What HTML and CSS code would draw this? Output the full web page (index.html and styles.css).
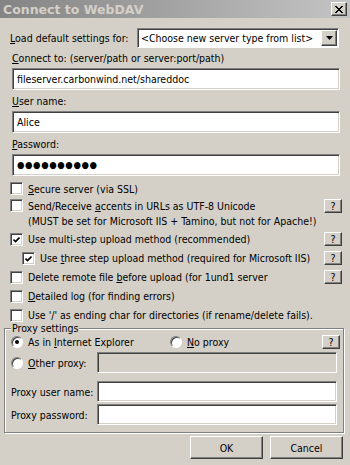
FILE: index.html
```html
<!DOCTYPE html>
<html lang="en">
<head>
    <meta charset="UTF-8">
    <meta name="viewport" content="width=device-width, initial-scale=1.0">
    <title>Connect to WebDAV</title>
    <link rel="stylesheet" href="styles.css">
</head>
<body>
    <div class="window">
        <div class="titlebar">
            <span class="title">Connect to WebDAV</span>
            <span class="close">
                <svg width="8" height="7" viewBox="0 0 8 7"><path d="M0 0L7 7M1 0L8 7M7 0L0 7M8 0L1 7" stroke="#000" stroke-width="1"/></svg>
            </span>
        </div>

        <div class="content">
            <div class="load-row">
                <span class="load-label"><u>L</u>oad default settings for:</span>
                <div class="combo">
                    <span class="combo-text">&lt;Choose new server type from list&gt;</span>
                    <span class="combo-btn">
                        <svg width="7" height="4" viewBox="0 0 7 4"><path d="M0 0H7L3.5 4Z" fill="#000"/></svg>
                    </span>
                </div>
            </div>

            <div class="field-label label-connect"><u>C</u>onnect to: (server/path or server:port/path)</div>
            <div class="textbox">fileserver.carbonwind.net/shareddoc</div>

            <div class="field-label"><u>U</u>ser name:</div>
            <div class="textbox">Alice</div>

            <div class="field-label"><u>P</u>assword:</div>
            <div class="textbox dots">&#9679;&#9679;&#9679;&#9679;&#9679;&#9679;&#9679;&#9679;&#9679;&#9679;</div>

            <div class="check-row first">
                <span class="check"></span>
                <span><u>S</u>ecure server (via SSL)</span>
            </div>
            <div class="check-row accents">
                <span class="check"></span>
                <span class="grow">Send/Receive <u>a</u>ccents in URLs as UTF-8 Unicode</span>
                <span class="help">?</span>
            </div>
            <div class="sub-line">(MUST be set for Microsoft IIS + Tamino, but not for Apache!)</div>
            <div class="check-row multi">
                <span class="check"><svg width="7" height="7" viewBox="0 0 7 7"><path d="M0.5 3.5L2.5 5.5L6.5 1.5" fill="none" stroke="#000" stroke-width="1.6"/></svg></span>
                <span class="grow">Use multi-step upload method (recommended)</span>
                <span class="help">?</span>
            </div>
            <div class="check-row indent">
                <span class="check"><svg width="7" height="7" viewBox="0 0 7 7"><path d="M0.5 3.5L2.5 5.5L6.5 1.5" fill="none" stroke="#000" stroke-width="1.6"/></svg></span>
                <span class="grow">Use <u>t</u>hree step upload method (required for Microsoft IIS)</span>
                <span class="help">?</span>
            </div>
            <div class="check-row">
                <span class="check"></span>
                <span class="grow">Delete remote file <u>b</u>efore upload (for 1und1 server</span>
                <span class="help">?</span>
            </div>
            <div class="check-row">
                <span class="check"></span>
                <span><u>D</u>etailed log (for finding errors)</span>
            </div>
            <div class="check-row">
                <span class="check"></span>
                <span>Use '/' as ending char for directories (if rename/delete fails).</span>
            </div>
        </div>

        <fieldset class="group">
            <legend>Proxy settings</legend>
            <div class="radio-row">
                <span class="radio on"></span>
                <span class="radio-text">As in <u>I</u>nternet Explorer</span>
                <span class="radio"></span>
                <span class="grow"><u>N</u>o proxy</span>
                <span class="help">?</span>
            </div>
            <div class="proxy-row">
                <span class="proxy-label"><span class="radio"></span><span><u>O</u>ther proxy:</span></span>
                <div class="textbox small disabled"></div>
            </div>
            <div class="proxy-row user">
                <span class="proxy-label">Proxy user name:</span>
                <div class="textbox small"></div>
            </div>
            <div class="proxy-row">
                <span class="proxy-label">Proxy password:</span>
                <div class="textbox small"></div>
            </div>
        </fieldset>

        <div class="buttons">
            <button class="btn">OK</button>
            <button class="btn">Cancel</button>
        </div>
    </div>
</body>
</html>
```

FILE: styles.css
```css
body {
margin: 0;
background-color: #d4d0c8;
font-family: "DejaVu Sans Condensed", "DejaVu Sans", sans-serif;
font-stretch: condensed;
font-size: 10.5px;
color: #000;
}

.window {
width: 350px;
height: 465px;
background-color: #d4d0c8;
overflow: hidden;
}

/* Title bar (inactive caption) */
.titlebar {
height: 18px;
display: flex;
align-items: center;
justify-content: space-between;
padding: 0 3px 0 3px;
background: linear-gradient(to right, #848484, #c4c4c4);
}

.title {
font-family: "DejaVu Sans", sans-serif;
font-stretch: normal;
font-weight: bold;
font-size: 12.5px;
color: #d4d0c8;
}

.close {
width: 14px;
height: 12px;
display: flex;
align-items: center;
justify-content: center;
background-color: #d4d0c8;
border: 1px solid;
border-color: #fff #404040 #404040 #fff;
box-shadow: inset -1px -1px #808080;
}

.content {
padding: 0 8px 0 10px;
}

/* Top combo box */
.load-row {
display: flex;
align-items: center;
margin-top: 10px;
height: 20px;
}

.load-label {
width: 127px;
white-space: nowrap;
}

.combo {
display: flex;
align-items: center;
width: 202px;
height: 20px;
box-sizing: border-box;
background: #fff;
border: 1px solid;
border-color: #808080 #fff #fff #808080;
box-shadow: inset 1px 1px #404040;
padding: 1px 1px 1px 3px;
}

.combo-text {
flex: 1;
line-height: 15px;
white-space: nowrap;
overflow: hidden;
}

.combo-btn {
width: 16px;
height: 16px;
box-sizing: border-box;
display: flex;
align-items: center;
justify-content: center;
background: #d4d0c8;
border: 1px solid;
border-color: #fff #404040 #404040 #fff;
box-shadow: inset -1px -1px #808080;
}

/* Labels and text boxes */
.field-label {
height: 14px;
line-height: 14px;
margin: 4px 0 3px 2px;
}

.label-connect {
margin-top: 3px;
}

.textbox {
height: 22px;
box-sizing: border-box;
margin-left: 2px;
width: 328px;
background: #fff;
border: 1px solid;
border-color: #808080 #fff #fff #808080;
box-shadow: inset 1px 1px #404040, inset -1px -1px #d4d0c8;
padding: 0 4px;
line-height: 20px;
white-space: nowrap;
}

.dots {
font-size: 9.5px;
letter-spacing: 0.6px;
}

/* Check boxes */
.check-row {
display: flex;
align-items: center;
height: 18px;
margin-top: 1px;
white-space: nowrap;
}

.check-row.first {
margin-top: 4px;
height: 17px;
}

.check-row.accents {
margin-top: 0;
height: 17px;
}

.check-row.multi {
margin-top: 2px;
}

.check-row.indent {
padding-left: 12px;
}

.sub-line {
height: 14px;
line-height: 14px;
padding-left: 18px;
white-space: nowrap;
}

.check {
width: 13px;
height: 13px;
box-sizing: border-box;
flex-shrink: 0;
margin: 0 5px 0 0;
background: #fff;
border: 1px solid;
border-color: #808080 #fff #fff #808080;
box-shadow: inset 1px 1px #404040, inset -1px -1px #d4d0c8;
display: flex;
align-items: center;
justify-content: center;
}

.grow {flex: 1;}

.help {
width: 18px;
height: 14px;
box-sizing: border-box;
text-align: center;
line-height: 12px;
flex-shrink: 0;
border: 1px solid;
border-color: #fff #404040 #404040 #fff;
box-shadow: inset -1px -1px #808080;
}

/* Proxy group */
.group {
margin: -2px 6px 0 4px;
padding: 0 3px 7px 6px;
min-width: 0;
border: 1px solid #808080;
box-shadow: inset 1px 1px #fff, 1px 1px #fff;
}

.group legend {
padding: 0 1px;
margin-left: 0;
line-height: 12px;
background: #d4d0c8;
}

.radio-row {
display: flex;
align-items: center;
height: 16px;
white-space: nowrap;
}

.radio {
width: 12px;
height: 12px;
box-sizing: border-box;
flex-shrink: 0;
border-radius: 50%;
background: #fff;
border: 1px solid;
border-color: #808080 #fff #fff #808080;
box-shadow: inset 1px 1px #404040;
margin-right: 5px;
display: flex;
align-items: center;
justify-content: center;
}

.radio.on::after {
content: "";
width: 4px;
height: 4px;
border-radius: 50%;
background: #000;
}

.radio-text {
width: 142px;
}

.proxy-row {
display: flex;
align-items: center;
margin-top: 2px;
}

.proxy-row.user {
margin-top: 8px;
}

.proxy-label {
width: 86px;
flex-shrink: 0;
display: flex;
align-items: center;
white-space: nowrap;
}

.textbox.small {
width: 240px;
height: 21px;
margin-left: 0;
}

.textbox.disabled {
background: #d4d0c8;
}

/* Dialog buttons */
.buttons {
display: flex;
justify-content: flex-end;
gap: 7px;
padding: 3px 7px 0 0;
}

.btn {
width: 73px;
height: 23px;
font-family: inherit;
font-stretch: condensed;
font-size: 10.5px;
background: #d4d0c8;
border: 1px solid;
border-color: #fff #404040 #404040 #fff;
box-shadow: inset -1px -1px #808080;
padding: 0;
}
```
